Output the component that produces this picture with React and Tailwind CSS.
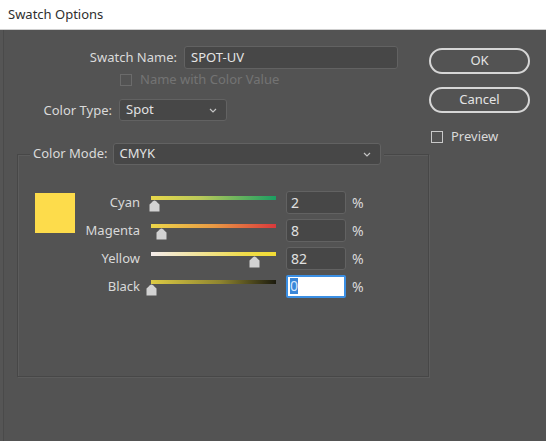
import React from "react";

const font = { fontFamily: '"Noto Sans", "Open Sans", Arial, sans-serif' };

const rows = [
  { name: "Cyan", value: 2, track: "bg-[linear-gradient(to_right,#e9d84a,#b9c95a_40%,#1a9e62)]" },
  { name: "Magenta", value: 8, track: "bg-[linear-gradient(to_right,#ecd64a,#e99a44_50%,#d9393c)]" },
  { name: "Yellow", value: 82, track: "bg-[linear-gradient(to_right,#f4ecec,#f0dc4a_75%,#f2dc34)]" },
  { name: "Black", value: 0, track: "bg-[linear-gradient(to_right,#ddcb44,#8f8530_55%,#1c1b0e)]", active: true },
];

function Chevron() {
  return (
    <svg width="8" height="5" viewBox="0 0 8 5" className="shrink-0">
      <path d="M1 1 L4 4 L7 1" fill="none" stroke="#c4c4c4" strokeWidth="1.2" />
    </svg>
  );
}

function Thumb() {
  return (
    <svg width="11" height="12" viewBox="0 0 11 12">
      <path d="M5.5 0.5 Q6.2 0.5 7 1.2 L10.5 4.5 L10.5 11.5 L0.5 11.5 L0.5 4.5 L4 1.2 Q4.8 0.5 5.5 0.5 Z" fill="#d2d2d2" />
    </svg>
  );
}

function Check({ disabled }) {
  return (
    <span
      className={
        "inline-block h-[12px] w-[12px] border " +
        (disabled ? "border-[#6b6b6b]" : "border-[#c9c9c9]")
      }
    />
  );
}

function Select({ value, width }) {
  return (
    <div
      className={
        "flex h-[22px] items-center justify-between rounded-[3px] border border-[#626262] bg-[#474747] pl-[6px] pr-[9px] text-[13px] text-[#e2e2e2] " +
        width
      }
    >
      <span>{value}</span>
      <Chevron />
    </div>
  );
}

function SliderRow({ row }) {
  return (
    <div className="flex h-[22px] items-center">
      <div className="mt-[2px] w-[65px] text-right text-[13px] text-[#d9d9d9]">{row.name}</div>
      <div className="relative ml-[11px] h-[22px] w-[125px]">
        <div className={"mt-[5px] h-[4px] w-full " + row.track} />
        <div className="absolute top-[9px]" style={{ left: (row.value / 100) * 125 - 5 }}>
          <Thumb />
        </div>
      </div>
      {row.active ? (
        <div className="ml-[10px] flex h-[23px] w-[60px] items-center rounded-[2px] border-2 border-[#3b8fe4] bg-white pl-[2px] text-[14px]">
          <span className="bg-[#3a86d8] leading-[16px] text-[#d6e6fb]">{row.value}</span>
        </div>
      ) : (
        <div className="ml-[10px] flex h-[23px] w-[60px] items-center rounded-[3px] border border-[#626262] bg-[#474747] pl-[4px] text-[14px] text-[#e0e0e0]">
          {row.value}
        </div>
      )}
      <div className="ml-[6px] text-[14px] text-[#d9d9d9]">%</div>
    </div>
  );
}

export default function App() {
  return (
    <div className="flex h-[441px] w-[546px] flex-col overflow-hidden bg-[#535353]" style={font}>
      <div className="flex h-[30px] items-center border-b border-[#cfcfcf] bg-white pl-[8px] text-[13px] text-[#2e2e2e]">
        Swatch Options
      </div>
      <div className="flex flex-1 shadow-[inset_3px_0_0_#555555,inset_4px_0_0_#4a4a4a]">
        <div className="w-[429px] pl-[17px]">
          <div className="mt-[16px] flex items-center">
            <div className="w-[160px] text-right text-[13px] text-[#dadada]">Swatch Name:</div>
            <div className="ml-[7px] flex h-[23px] w-[214px] items-center rounded-[3px] border border-[#626262] bg-[#474747] pl-[6px] text-[13px] text-[#e4e4e4]">
              SPOT-UV
            </div>
          </div>
          <div className="mt-[4px] flex h-[14px] items-center pl-[103px]">
            <Check disabled />
            <span className="ml-[8px] text-[13px] text-[#737373]">Name with Color Value</span>
          </div>
          <div className="mt-[12px] flex items-center">
            <div className="mt-[2px] w-[95px] text-right text-[13px] text-[#dadada]">Color Type:</div>
            <div className="ml-[7px]">
              <Select value="Spot" width="w-[108px]" />
            </div>
          </div>
          <fieldset className="mt-[22px] h-[234px] w-[412px] border border-[#474747] shadow-[1px_1px_0_#5c5c5c,inset_1px_1px_0_#5c5c5c]">
            <legend className="ml-[12px] flex items-center bg-[#535353] px-[3px]">
              <span className="text-[13px] text-[#dadada]">Color Mode:</span>
              <div className="ml-[5px]">
                <Select value="CMYK" width="w-[268px]" />
              </div>
            </legend>
            <div className="mt-[26px] flex">
              <div className="ml-[17px] mt-[2px] h-[40px] w-[40px] bg-[#fddc4b]" />
              <div className="flex flex-col gap-[6px]">
                {rows.map((r) => (
                  <SliderRow key={r.name} row={r} />
                ))}
              </div>
            </div>
          </fieldset>
        </div>
        <div className="flex w-[101px] flex-col pt-[18px]">
          <button className="h-[26px] w-[101px] rounded-full border-2 border-[#d6d6d6] text-[13px] text-[#e4e4e4]">
            OK
          </button>
          <button className="mt-[13px] h-[26px] w-[101px] rounded-full border-2 border-[#d6d6d6] text-[13px] text-[#e4e4e4]">
            Cancel
          </button>
          <div className="mt-[14px] flex items-center pl-[2px]">
            <Check />
            <span className="ml-[8px] text-[13px] text-[#dadada]">Preview</span>
          </div>
        </div>
      </div>
    </div>
  );
}
